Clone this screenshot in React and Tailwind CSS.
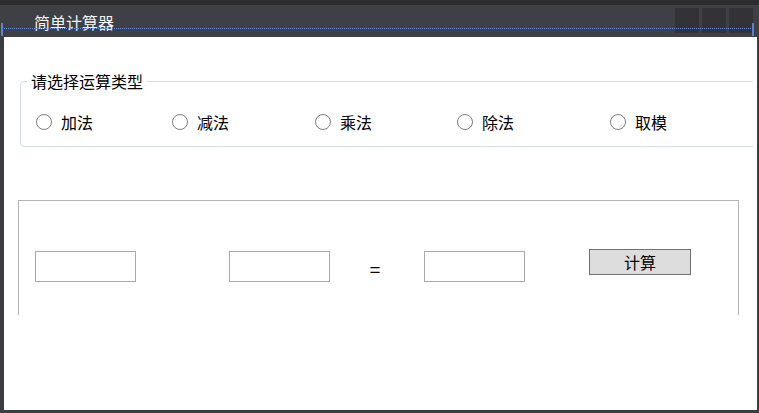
import React from "react";

const OPS = [
  { label: "加法", w: "w-[136px]" },
  { label: "减法", w: "w-[143px]" },
  { label: "乘法", w: "w-[142px]" },
  { label: "除法", w: "w-[153px]" },
  { label: "取模", w: "w-[120px]" },
];

function Radio({ label, w }) {
  return (
    <label className={`flex shrink-0 items-center gap-[9px] ${w}`}>
      <span className="h-[16px] w-[16px] rounded-full border border-[#7f7f7f] bg-white" />
      <span className="text-[16px] leading-[20px] text-black">{label}</span>
    </label>
  );
}

function Field() {
  return <div className="h-[31px] w-[101px] shrink-0 border border-[#ababab] bg-white" />;
}

export default function App() {
  return (
    <div
      className="relative h-[413px] w-[759px] overflow-hidden bg-[#3c3d42]"
      style={{ fontFamily: '"Noto Sans CJK SC", "Noto Sans", sans-serif' }}
    >
      <div className="h-[5px] bg-[#2c2c2f]" />
      <div className="relative flex h-[32px] items-start bg-[#3f4045]">
        <span className="ml-[34px] mt-[7px] text-[16px] leading-[20px] text-[#f4f4f4]">简单计算器</span>
        <div className="ml-auto mr-[6px] mt-[3px] flex gap-[3px]">
          <div className="h-[25px] w-[24px] bg-[#333337]" />
          <div className="h-[25px] w-[24px] bg-[#333337]" />
          <div className="h-[25px] w-[24px] bg-[#333337]" />
        </div>
        <div className="absolute left-[4px] right-[6px] top-[23px] border-t border-dotted border-[#6a90e0]" />
        <div className="absolute left-[1px] top-[18px] h-[13px] w-[2px] bg-[#5b80cc]" />
        <div className="absolute left-[752px] top-[18px] h-[13px] w-[2px] bg-[#5b80cc]" />
      </div>

      <div className="ml-[4px] h-[373px] w-[753px] bg-white">
        <div className="h-full w-[749px] overflow-hidden">
          <fieldset className="ml-[16px] mt-[34px] w-[745px] rounded-[4px] border border-[#d5dbe3]">
            <legend className="ml-[6px] px-[4px] text-[16px] leading-[20px] text-black">请选择运算类型</legend>
            <div className="flex pb-[14px] pl-[15px] pt-[21px]">
              {OPS.map((op) => (
                <Radio key={op.label} {...op} />
              ))}
            </div>
          </fieldset>

          <div className="ml-[14px] mt-[53px] h-[115px] w-[721px] border-x border-t border-[#b4b4b4]">
            <div className="flex items-start pl-[16px] pt-[48px]">
              <div className="mt-[2px]">
                <Field />
              </div>
              <div className="ml-[93px] mt-[2px]">
                <Field />
              </div>
              <span className="ml-[38px] mt-[6px] w-[14px] text-center text-[19px] leading-[28px] text-black">=</span>
              <div className="ml-[42px] mt-[2px]">
                <Field />
              </div>
              <button className="ml-[64px] h-[26px] w-[102px] border border-[#707070] bg-[#dddddd] text-[16px] leading-[20px] text-black">
                计算
              </button>
            </div>
          </div>
        </div>
      </div>
    </div>
  );
}
